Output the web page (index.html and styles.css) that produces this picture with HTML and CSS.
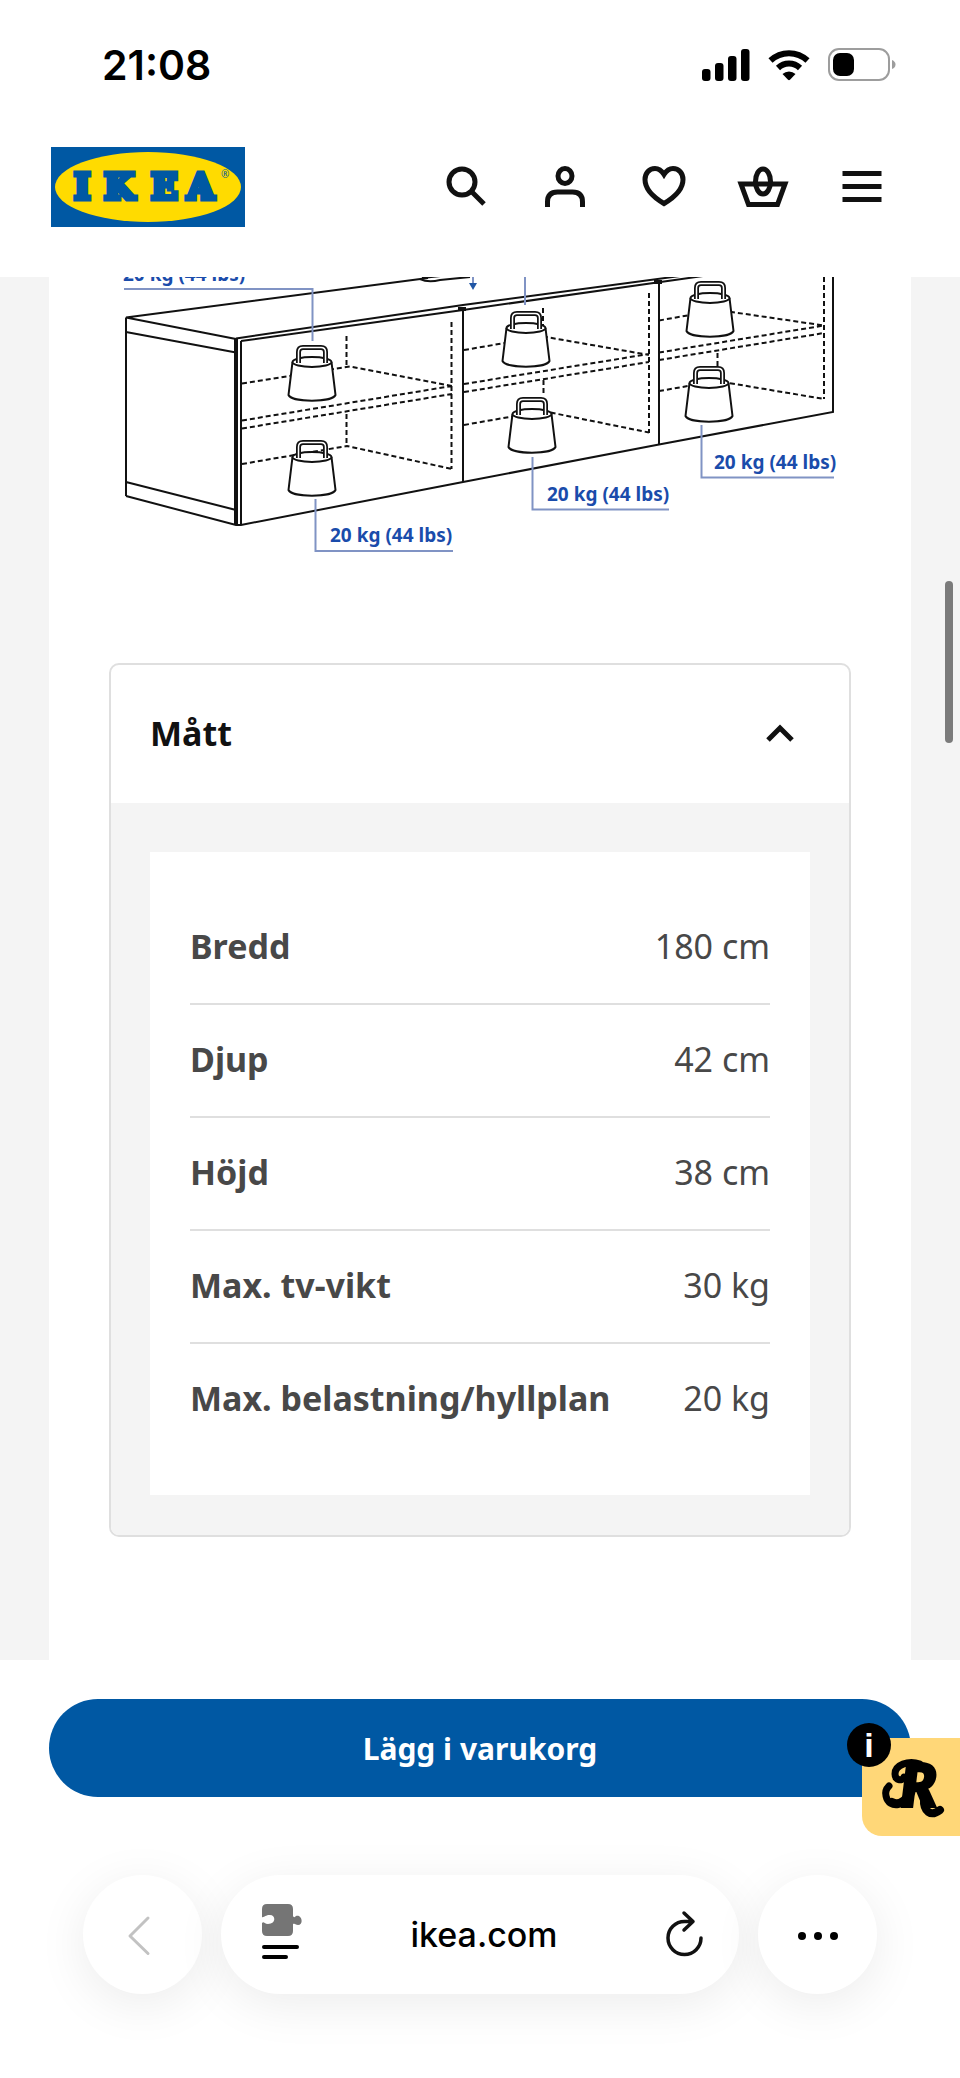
FILE: index.html
```html
<!DOCTYPE html>
<html lang="sv">
<head>
    <meta charset="UTF-8">
    <meta name="viewport" content="width=device-width, initial-scale=1.0">
    <title>IKEA</title>
    <link rel="stylesheet" href="styles.css">
</head>
<body>
    <div class="status-bar">
        <span class="clock">21:08</span>
        <div class="status-icons">
            <svg width="48" height="32" viewBox="0 0 48 32">
                <rect x="0" y="20" width="8.500" height="12" rx="3"/>
                <rect x="13" y="14" width="8.500" height="18" rx="3"/>
                <rect x="26" y="7" width="8.500" height="25" rx="3"/>
                <rect x="39" y="0" width="8.500" height="32" rx="3"/>
            </svg>
            <svg width="42" height="32" viewBox="0 0 42 32">
                <g fill="none" stroke="#000" stroke-width="6">
                    <path d="M2.500 11.500a27 27 0 0 1 37 0"/>
                    <path d="M10 19a16 16 0 0 1 22 0"/>
                </g>
                <path d="M14.500 25a9.500 9.500 0 0 1 13 0l-5.500 5.800q-1 .8-2 0z"/>
            </svg>
            <svg width="68" height="34" viewBox="0 0 68 34">
                <rect x="1" y="1" width="60" height="31" rx="10" fill="none" stroke="#9d9d9d" stroke-width="2"/>
                <rect x="5" y="5" width="21" height="23" rx="7"/>
                <path d="M64 12q3.500 1.500 3.500 4.500t-3.500 4.500z" fill="#9d9d9d"/>
            </svg>
        </div>
    </div>

    <header class="site-header">
        <a class="logo" href="#" aria-label="IKEA">
            <svg width="194" height="80" viewBox="0 0 194 80">
                <rect width="194" height="80" fill="#0058a3"/>
                <ellipse cx="97" cy="40" rx="93" ry="35" fill="#ffdb00"/>
                <text class="logo-text" x="23 53 100 136" y="52">IKEA</text>
                <text class="logo-mark" x="170" y="31">®</text>
            </svg>
        </a>
        <nav class="header-nav">
            <button class="icon-button" aria-label="Sök">
                <svg viewBox="0 0 60 60"><circle cx="26" cy="31" r="13"/><path d="M35 40l13 13"/></svg>
            </button>
            <button class="icon-button" aria-label="Logga in">
                <svg viewBox="0 0 60 60"><ellipse cx="30" cy="25" rx="7" ry="7.500"/><path d="M12.500 56v-5q0-10 10-10h15q10 0 10 10v5"/></svg>
            </button>
            <button class="icon-button" aria-label="Favoriter">
                <svg viewBox="0 0 60 60"><path d="M30 23.500C27.500 19.500 24.500 17.500 21 17.500c-6 0-10 5-10 11C11 38 19 46 30 52.500 41 46 49 38 49 28.500c0-6-4-11-10-11-3.500 0-6.500 2-9 6z"/></svg>
            </button>
            <button class="icon-button" aria-label="Varukorg">
                <svg viewBox="0 0 60 60"><path d="M8 33h44l-7.500 20.500h-29z"/><ellipse cx="30" cy="30.500" rx="7.500" ry="12.500"/></svg>
            </button>
            <button class="icon-button" aria-label="Meny">
                <svg viewBox="0 0 60 60"><path d="M10.500 22.500h39M10.500 35.500h39M10.500 48.500h39"/></svg>
            </button>
        </nav>
    </header>

    <main class="page">
        <!-- load diagram for the bench -->
        <svg class="diagram" viewBox="49 277 862 386" role="img" aria-label="Max. belastning">
            <defs>
                <g id="weight">
                    <path d="M-19.500 16L-23.500 49C-20 56.500 20 56.500 23.500 49L19.500 16" fill="#fff"/>
                    <ellipse cx="0" cy="16" rx="19.500" ry="5" fill="#fff"/>
                    <path d="M-13.500 17V6Q-13.500 1.500 -9 1.500H9Q13.500 1.500 13.500 6V17" stroke-width="5"/>
                    <path d="M-13.500 17V6Q-13.500 1.500 -9 1.500H9Q13.500 1.500 13.500 6V17" stroke="#fff" stroke-width="1.500"/>
                </g>
            </defs>
            <g class="outline">
                <path d="M126 317.500L428 278M126 317.500L236 339M126 332L236 352.500M126 317.500V496M126 482L236 510M126 496L236 525H241L463 482L659 444.500L833 412V277"/>
                <path d="M236 338.500L463 305L680 276M241 341L463 310L657 282.500L703 276"/>
                <path d="M236 338V525" stroke-width="4"/>
                <path d="M241 341V525M463 307V482M659 281V444"/>
                <path d="M420 279Q428 283 440 280L470 277M422 278L450 275" stroke-width="2"/>
                <path d="M458 309h8M654 282h8" stroke-width="4"/>
            </g>
            <g class="hidden-edges">
                <path d="M346.500 336V366M242 383.500L350 366.500L452 386M242 420.500L452 386M242 428.500L452 394M451.500 322V469M346.500 414V446M242 464L347 446L452 469"/>
                <path d="M543 308V336M464 350L543 336.500L649 355M464 384L649 354M464 392L649 362M649 293V433M543.500 380V396M464 425L543 411L649 432.500"/>
                <path d="M659 320.500L718 310L824 325.500M659 352.500L824 325.500M659 360L824 333M824 277V399M717.500 353V366M659 391L717 381L824 399"/>
            </g>
            <g class="weights">
                <use href="#weight" x="312" y="346"/>
                <use href="#weight" x="312" y="441"/>
                <use href="#weight" x="526" y="312"/>
                <use href="#weight" x="532" y="398"/>
                <use href="#weight" x="710" y="282"/>
                <use href="#weight" x="709" y="367"/>
            </g>
            <g class="leaders">
                <path d="M124 289H312.500V341M315.500 499V551H453M532.500 457V509.500H669M701.500 425V477.500H834M525 277V305"/>
                <path d="M473 277V285"/>
                <path class="arrow" d="M469 283h8l-4 7z"/>
            </g>
            <g class="load-labels">
                <text x="123" y="281">20 kg (44 lbs)</text>
                <text x="330" y="542">20 kg (44 lbs)</text>
                <text x="547" y="501">20 kg (44 lbs)</text>
                <text x="714" y="469">20 kg (44 lbs)</text>
            </g>
        </svg>

        <section class="accordion">
            <button class="accordion-header" aria-expanded="true">
                Mått
                <svg width="28" height="20" viewBox="0 0 28 20"><path d="M2 17L14 5l12 12"/></svg>
            </button>
            <div class="accordion-body">
                <table class="measurements">
                    <tr><th scope="row">Bredd</th><td>180 cm</td></tr>
                    <tr><th scope="row">Djup</th><td>42 cm</td></tr>
                    <tr><th scope="row">Höjd</th><td>38 cm</td></tr>
                    <tr><th scope="row">Max. tv-vikt</th><td>30 kg</td></tr>
                    <tr><th scope="row">Max. belastning/hyllplan</th><td>20 kg</td></tr>
                </table>
            </div>
        </section>
        <div class="scroll-thumb"></div>
    </main>

    <div class="buy-bar">
        <button class="buy-button">Lägg i varukorg</button>
        <button class="extension-tab" aria-label="Rabatt">
            <svg width="98" height="98" viewBox="0 0 98 98">
                <text class="extension-letter" x="39" y="68">R</text>
                <g fill="none" stroke="#000" stroke-linecap="round">
                    <path d="M58 26C46 22 33 27 33 36c0 6 7 8 9 3" stroke-width="7"/>
                    <path d="M50 54C45 68 27 72 24 58c-1-4 0-7 3-10" stroke-width="7"/>
                    <path d="M30 64c5 3 11 0 15-5" stroke-width="8"/>
                    <path d="M62 60c-1 14 7 19 16 12" stroke-width="8"/>
                </g>
            </svg>
            <span class="info-badge">i</span>
        </button>
    </div>

    <footer class="browser-bar">
        <button class="round-button" aria-label="Tillbaka">
            <svg width="60" height="60" viewBox="0 0 60 60"><path d="M35 13L17 31l18 17.500" fill="none" stroke="#c2c2c2" stroke-width="3" stroke-linecap="round" stroke-linejoin="round"/></svg>
        </button>
        <div class="address-bar">
            <button class="address-icon" aria-label="Sidmeny">
                <svg width="40" height="62" viewBox="0 0 40 62">
                    <path fill="#757575" d="M5 0h21q5 0 5 5v7c1 2 2 1 3 0 6-2 8 9 2 9-2 0-3-2-5-1v7q0 5-5 5H5q-5 0-5-5v-8c2-2 2 1 6 1 8 0 8-9 2-9-5 0-6 3-8 2V5q0-5 5-5z"/>
                    <path d="M2 43h33M2 53h22" stroke="#000" stroke-width="4" stroke-linecap="round"/>
                </svg>
            </button>
            <a class="address" href="#">ikea.com</a>
            <button class="address-icon" aria-label="Ladda om">
                <svg width="38" height="50" viewBox="0 0 38 50"><path d="M35 28a16.500 16.500 0 1 1-16.500-16.500H27M18 3l9 8.500-9 8.500" fill="none" stroke="#111" stroke-width="3.500" stroke-linecap="round" stroke-linejoin="round"/></svg>
            </button>
        </div>
        <button class="round-button" aria-label="Mer">
            <svg width="60" height="60" viewBox="0 0 60 60"><circle cx="14" cy="31" r="4"/><circle cx="30" cy="31" r="4"/><circle cx="46" cy="31" r="4"/></svg>
        </button>
    </footer>
</body>
</html>
```

FILE: styles.css
```css
* {
    box-sizing: border-box;
}

body {
    margin: 0;
    background-color: #fff;
    color: #111;
    font-family: "Noto Sans", "Liberation Sans", sans-serif;
}

button {
    border: none;
    padding: 0;
    background: none;
    color: inherit;
    font: inherit;
    cursor: pointer;
}

a {
    color: inherit;
    text-decoration: none;
}

svg {
    display: block;
}

.status-bar {
    display: flex;
    align-items: center;
    justify-content: space-between;
    height: 127px;
    padding: 2px 64px 0 102px;
}

.clock {
    color: #000;
    font-family: Inter, sans-serif;
    font-size: 41px;
    font-weight: 600;
    line-height: 48px;
}

.status-icons {
    display: flex;
    align-items: center;
    gap: 18px;
}

.site-header {
    display: flex;
    align-items: center;
    justify-content: space-between;
    height: 150px;
    padding: 0 68px 30px 51px;
}

.header-nav {
    display: flex;
    gap: 39px;
}

.icon-button svg {
    width: 60px;
    height: 60px;
    margin-bottom: 12px;
    fill: none;
    stroke: #111;
    stroke-width: 5;
}

.logo-text {
    fill: #0058a3;
    stroke: #0058a3;
    stroke-width: 5;
    font-family: "DejaVu Serif", serif;
    font-size: 35px;
    font-weight: bold;
}

.logo-mark {
    fill: #0058a3;
    font-size: 10px;
}

.page {
    position: relative;
    padding: 0 49px 123px;
    background: linear-gradient(#fff, #fff) center / calc(100% - 98px) 100% no-repeat #f4f4f4;
}

.diagram {
    width: 100%;
    height: auto;
    overflow: hidden;
}

.outline {
    fill: none;
    stroke: #111;
    stroke-width: 2;
}

.hidden-edges {
    fill: none;
    stroke: #111;
    stroke-width: 2;
    stroke-dasharray: 5 3;
}

.weights {
    fill: none;
    stroke: #111;
    stroke-width: 2;
}

.leaders {
    fill: none;
    stroke: #8093c4;
    stroke-width: 2;
}

.arrow {
    fill: #2056a5;
    stroke: none;
}

.load-labels {
    fill: #1a4cab;
    font-size: 19px;
    font-weight: bold;
}

.accordion {
    margin: 0 60px;
    border: 2px solid #dfdfdf;
    border-radius: 10px;
    overflow: hidden;
}

.accordion-header {
    display: flex;
    align-items: center;
    justify-content: space-between;
    width: 100%;
    height: 138px;
    padding: 0 55px 2px 39px;
    font-size: 34px;
    font-weight: bold;
}

.accordion-header svg {
    fill: none;
    stroke: #111;
    stroke-width: 5;
}

.accordion-body {
    padding: 49px 39px 40px;
    background-color: #f4f4f4;
}

.measurements {
    display: block;
    padding: 40px;
    background-color: #fff;
    color: #484848;
    font-size: 34px;
    line-height: 48px;
}

.measurements tbody {
    display: block;
}

.measurements tr {
    display: flex;
    justify-content: space-between;
    padding: 30px 0 33px;
    border-bottom: 2px solid #dfdfdf;
}

.measurements tr:last-child {
    border-bottom: none;
}

.measurements th,
.measurements td {
    padding: 0;
}

.scroll-thumb {
    position: absolute;
    top: 304px;
    right: 7px;
    width: 8px;
    height: 162px;
    border-radius: 4px;
    background-color: #7b7b7b;
}

.buy-bar {
    position: relative;
    padding: 39px 49px 78px;
}

.buy-button {
    width: 100%;
    height: 98px;
    border-radius: 49px;
    background-color: #0058a3;
    color: #fff;
    font-size: 30px;
    font-weight: bold;
}

.extension-tab {
    position: absolute;
    top: 78px;
    right: 0;
    border-radius: 20px 0 0 20px;
    background-color: #ffd778;
}

.extension-letter {
    stroke: #000;
    stroke-width: 4;
    font-family: Lato, sans-serif;
    font-size: 58px;
    font-style: italic;
    font-weight: 900;
}

.info-badge {
    position: absolute;
    top: -15px;
    left: -15px;
    width: 44px;
    height: 44px;
    border-radius: 50%;
    background-color: #000;
    color: #fff;
    font-family: "Liberation Sans", sans-serif;
    font-size: 34px;
    font-weight: bold;
    line-height: 44px;
    text-align: center;
}

.browser-bar {
    display: flex;
    gap: 19px;
    padding: 0 83px 84px;
}

.round-button,
.address-bar {
    display: flex;
    align-items: center;
    justify-content: center;
    height: 119px;
    border-radius: 60px;
    background-color: #fff;
    box-shadow: 0 10px 50px rgba(0, 0, 0, 0.08);
}

.round-button {
    flex: 0 0 119px;
}

.address-bar {
    flex: 1;
    justify-content: space-between;
    padding: 0 35px 0 41px;
}

.address {
    color: #000;
    font-family: Inter, sans-serif;
    font-size: 34px;
    font-weight: 500;
}
```
